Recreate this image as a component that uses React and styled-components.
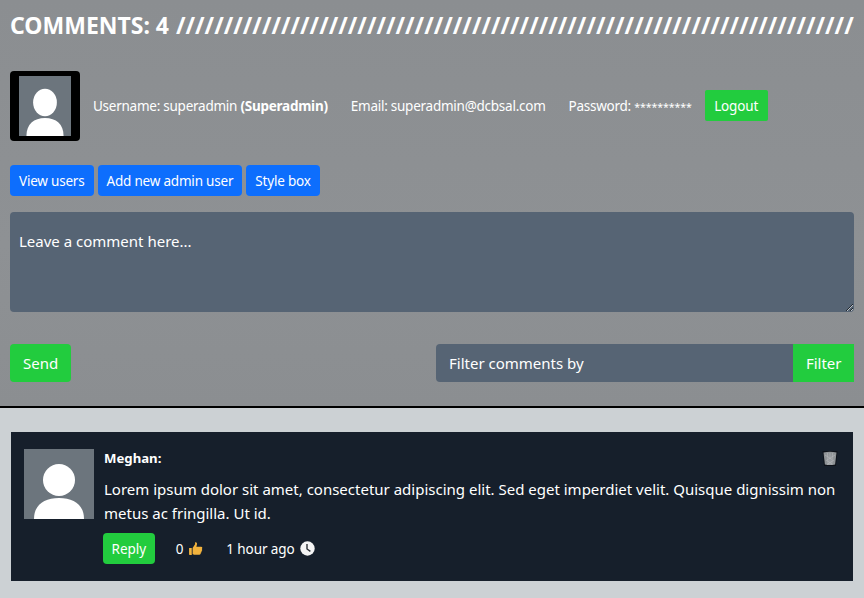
import React from 'react';
import styled, { createGlobalStyle } from 'styled-components';

const GlobalStyle = createGlobalStyle`
  html, body {
    margin: 0;
    padding: 0;
    height: 100%;
    overflow: hidden;
  }
  body {
    font-family: 'Noto Sans', 'Open Sans', sans-serif;
    font-size: 15px;
    color: #fff;
    background: #ccd1d4;
  }
  * {
    box-sizing: border-box;
  }
`;

const Header = styled.header`
  height: 408px;
  padding: 10px 10px 0;
  background: linear-gradient(180deg, #8b8e91 0%, #8e9194 60%, #8b8e91 100%);
  border-bottom: 2px solid #000;
`;

const Title = styled.h2`
  margin: 0;
  height: 32px;
  line-height: 30px;
  font-size: 23px;
  font-weight: 700;
  white-space: nowrap;
`;

const Slashes = styled.span`
  margin-left: 1px;
`;

const UserRow = styled.div`
  display: flex;
  align-items: center;
  height: 70px;
  margin-top: 29px;
  font-size: 13.5px;
  letter-spacing: -0.25px;
`;

const AvatarFrame = styled.div`
  width: 70px;
  height: 70px;
  padding: 5px 9px;
  background: #000;
  border-radius: 4px;
  margin-right: 13px;
`;

const Info = styled.span`
  margin-right: ${p => p.$gap}px;
  padding-bottom: 1px;
  white-space: nowrap;
`;

const Mask = styled.span`
  font-size: 10.6px;
  letter-spacing: -0.1px;
`;

const GreenButton = styled.button`
  height: ${p => p.$h}px;
  padding: 0 ${p => p.$px}px;
  border: 0;
  border-radius: ${p => p.$radius}px;
  background: #22cc3e;
  color: #fff;
  font: inherit;
  font-size: ${p => p.$size}px;
`;

const LogoutButton = styled(GreenButton)`
  margin-bottom: 1px;
  letter-spacing: -0.15px;
`;

const AdminBar = styled.div`
  display: flex;
  gap: 4px;
  margin-top: 24px;
`;

const BlueButton = styled.button`
  height: 31px;
  padding: 0 9px;
  border: 0;
  border-radius: 4px;
  background: #0d6efd;
  color: #fff;
  font: inherit;
  font-size: 13.5px;
  letter-spacing: -0.2px;
`;

const CommentBox = styled.textarea`
  display: block;
  width: 100%;
  height: 100px;
  margin-top: 16px;
  padding: 18px 9px;
  border: 0;
  border-radius: 4px;
  background: #566474;
  color: #fff;
  font: inherit;
  font-size: 15px;
  line-height: 22px;
  outline: 0;
  &::placeholder {
    color: #fff;
    opacity: 1;
  }
`;

const ActionRow = styled.div`
  display: flex;
  justify-content: space-between;
  margin-top: 32px;
`;

const FilterGroup = styled.div`
  display: flex;
  width: 418px;
`;

const FilterInput = styled.input`
  flex: 1;
  min-width: 0;
  height: 38px;
  padding: 0 13px;
  border: 0;
  border-radius: 4px 0 0 4px;
  background: #566474;
  color: #fff;
  font: inherit;
  outline: 0;
  &::placeholder {
    color: #fff;
    opacity: 1;
  }
`;

const CommentList = styled.main`
  padding: 24px 11px 0;
`;

const Card = styled.article`
  display: flex;
  height: 149px;
  padding: 17px 13px 0;
  background: #161f2b;
`;

const CardAvatar = styled.div`
  flex: none;
  width: 70px;
  height: 70px;
  margin-right: 10px;
`;

const CardBody = styled.div`
  flex: 1;
  min-width: 0;
`;

const NameRow = styled.div`
  display: flex;
  justify-content: space-between;
  align-items: center;
  height: 18px;
  padding-right: 2px;
`;

const Name = styled.strong`
  font-size: 13.2px;
`;

const Message = styled.p`
  margin: 10px 0 8px;
  font-size: 15px;
  line-height: 24px;
`;

const MetaRow = styled.div`
  display: flex;
  align-items: center;
  margin-left: -1px;
  font-size: 13.5px;
  letter-spacing: -0.1px;
`;

const MetaItem = styled.span`
  display: inline-flex;
  align-items: center;
  gap: 5px;
  margin-left: ${p => p.$gap}px;
`;

const Avatar = () => (
  <svg width="100%" height="100%" viewBox="0 0 70 70" preserveAspectRatio="none">
    <rect width="70" height="70" fill="#6c757d" />
    <circle cx="35" cy="31" r="16" fill="#fff" />
    <path d="M10 70 C10 56 20 49 35 49 C50 49 60 56 60 70 Z" fill="#fff" />
  </svg>
);

const Thumb = () => (
  <svg width="15" height="15" viewBox="0 0 14 14">
    <path
      d="M1 6.5h2.5V13H1.6a.6.6 0 0 1-.6-.6z M4.3 6.6 6.6 3V1.2c1.4-.4 2.2.7 1.7 2.4L7.8 5.4h4.4c1.3 0 1.5 1.5.7 2 .6.6.4 1.6-.3 1.9.3.7 0 1.5-.7 1.7.2.9-.3 1.8-1.3 1.8H6.4c-1 0-1.6-.4-2.1-.7z"
      fill="#f2b33d"
    />
  </svg>
);

const Clock = () => (
  <svg width="15" height="15" viewBox="0 0 15 15">
    <circle cx="7.5" cy="7.5" r="7.2" fill="#f4f4f4" />
    <path d="M7 3V8L10.4 10.4" stroke="#2b2f36" strokeWidth="1.4" fill="none" />
  </svg>
);

const Trash = () => (
  <svg width="16" height="17" viewBox="0 0 16 17">
    <path d="M.5 1h15l-1.6 15H2.1z" fill="#0d1118" />
    <path d="M1.5 2.4q6.5-1.2 13 0l-1.4 12.2q-5.1 1-10.2 0z" fill="#8f9396" />
    <path
      d="M3 5l7 4.5M13 5l-8 5M4 10l6 4M12 10l-7 4.5M5.5 3l.7 12M8 3v12M10.5 3l-.7 12"
      stroke="#b9bcbe"
      strokeWidth=".55"
      fill="none"
    />
  </svg>
);

const App = () => {
  return (
    <>
      <GlobalStyle />
      <Header>
        <Title>
          COMMENTS: 4 <Slashes>{'/'.repeat(71)}</Slashes>
        </Title>
        <UserRow>
          <AvatarFrame>
            <Avatar />
          </AvatarFrame>
          <Info $gap={23}>
            Username: superadmin <b>(Superadmin)</b>
          </Info>
          <Info $gap={23}>Email: superadmin@dcbsal.com</Info>
          <Info $gap={13}>
            Password: <Mask>**********</Mask>
          </Info>
          <LogoutButton type="button" $h={31} $px={9.5} $radius={2} $size={13.5}>
            Logout
          </LogoutButton>
        </UserRow>
        <AdminBar>
          <BlueButton type="button">View users</BlueButton>
          <BlueButton type="button">Add new admin user</BlueButton>
          <BlueButton type="button">Style box</BlueButton>
        </AdminBar>
        <CommentBox placeholder="Leave a comment here..." />
        <ActionRow>
          <GreenButton type="button" $h={38} $px={13} $radius={4} $size={15}>
            Send
          </GreenButton>
          <FilterGroup>
            <FilterInput placeholder="Filter comments by" />
            <GreenButton type="button" $h={38} $px={12.5} $radius={0} $size={15}>
              Filter
            </GreenButton>
          </FilterGroup>
        </ActionRow>
      </Header>
      <CommentList>
        <Card>
          <CardAvatar>
            <Avatar />
          </CardAvatar>
          <CardBody>
            <NameRow>
              <Name>Meghan:</Name>
              <Trash />
            </NameRow>
            <Message>
              Lorem ipsum dolor sit amet, consectetur adipiscing elit. Sed eget imperdiet velit. Quisque dignissim non metus ac fringilla. Ut id.
            </Message>
            <MetaRow>
              <GreenButton type="button" $h={31} $px={8.5} $radius={4} $size={13.5}>
                Reply
              </GreenButton>
              <MetaItem $gap={21}>
                0 <Thumb />
              </MetaItem>
              <MetaItem $gap={23}>
                1 hour ago <Clock />
              </MetaItem>
            </MetaRow>
          </CardBody>
        </Card>
      </CommentList>
    </>
  );
};

export default App;
